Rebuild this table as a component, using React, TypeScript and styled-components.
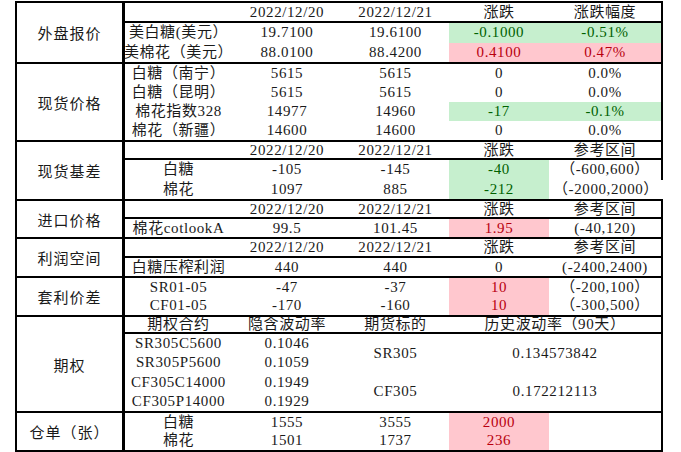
import styled, { createGlobalStyle, css } from "styled-components";

type Tone = "rise" | "fall";
type CellData =
  | string
  | { t: string; tone?: Tone; cols?: number; rows?: number; open?: boolean };

const GlobalStyle = createGlobalStyle`
  body {
    margin: 0;
    background: #fff;
  }
`;

const Sheet = styled.div`
  margin: 1px 0 0 15px;
  width: fit-content;
  border-top: 2px solid #000;
  border-left: 2px solid #000;
  font-family: "Liberation Serif", "Noto Sans CJK SC", serif;
  font-size: 15px;
  color: #1a1a1a;
`;

const Section = styled.div`
  display: flex;
  border-bottom: 2px solid #000;
`;

const Label = styled.div`
  width: 108px;
  box-sizing: border-box;
  border-right: 3px solid #000;
  display: flex;
  align-items: center;
  justify-content: center;
  letter-spacing: 1px;
  font-size: 15px;
`;

const Grid = styled.div<{ $rows: string }>`
  display: grid;
  grid-template-columns: 107px 110px 107px 100px 114px;
  grid-template-rows: ${(p) => p.$rows};
`;

const toneStyle = {
  rise: css`
    background: #ffc7ce;
    color: #b8000f;
  `,
  fall: css`
    background: #c6efce;
    color: #006100;
  `,
};

const Cell = styled.div<{
  $tone?: Tone;
  $head?: boolean;
  $edge?: boolean;
  $open?: boolean;
  $cols?: number;
  $rows?: number;
}>`
  display: flex;
  align-items: center;
  justify-content: ${(p) => (p.$open ? "flex-start" : "center")};
  padding-left: ${(p) => (p.$open ? "4px" : "0")};
  box-sizing: border-box;
  white-space: nowrap;
  letter-spacing: 0.6px;
  line-height: 1;
  grid-column: span ${(p) => p.$cols ?? 1};
  grid-row: span ${(p) => p.$rows ?? 1};
  border-bottom: ${(p) => (p.$head ? "2px solid #000" : "none")};
  border-right: ${(p) => (p.$edge ? "2px solid #000" : "none")};
  ${(p) => p.$tone && toneStyle[p.$tone]}
`;

const Row = ({ cells, head }: { cells: CellData[]; head?: boolean }) => (
  <>
    {cells.map((c, i) => {
      const d = typeof c === "string" ? { t: c } : c;
      const last = i === cells.length - 1 && !d.open;
      return (
        <Cell
          key={i}
          $head={head}
          $edge={last}
          $tone={d.tone}
          $open={d.open}
          $cols={d.cols}
          $rows={d.rows}
        >
          {d.t}
        </Cell>
      );
    })}
  </>
);

const dates = ["", "2022/12/20", "2022/12/21", "涨跌", "参考区间"];

export default function App() {
  return (
    <>
      <GlobalStyle />
      <Sheet>
        <Section>
          <Label>外盘报价</Label>
          <Grid $rows="20px 19.5px 19.5px">
            <Row head cells={["", "2022/12/20", "2022/12/21", "涨跌", "涨跌幅度"]} />
            <Row
              cells={[
                "美白糖(美元）",
                "19.7100",
                "19.6100",
                { t: "-0.1000", tone: "fall" },
                { t: "-0.51%", tone: "fall" },
              ]}
            />
            <Row
              cells={[
                "美棉花（美元）",
                "88.0100",
                "88.4200",
                { t: "0.4100", tone: "rise" },
                { t: "0.47%", tone: "rise" },
              ]}
            />
          </Grid>
        </Section>

        <Section>
          <Label>现货价格</Label>
          <Grid $rows="19px 19px 19px 19px">
            <Row cells={["白糖（南宁）", "5615", "5615", "0", "0.0%"]} />
            <Row cells={["白糖（昆明）", "5615", "5615", "0", "0.0%"]} />
            <Row
              cells={[
                "棉花指数328",
                "14977",
                "14960",
                { t: "-17", tone: "fall" },
                { t: "-0.1%", tone: "fall" },
              ]}
            />
            <Row cells={["棉花（新疆）", "14600", "14600", "0", "0.0%"]} />
          </Grid>
        </Section>

        <Section>
          <Label>现货基差</Label>
          <Grid $rows="18px 19.5px 19.5px">
            <Row head cells={dates} />
            <Row cells={["白糖", "-105", "-145", { t: "-40", tone: "fall" }, "（-600,600）"]} />
            <Row
              cells={[
                "棉花",
                "1097",
                "885",
                { t: "-212", tone: "fall" },
                { t: "（-2000,2000）", open: true },
              ]}
            />
          </Grid>
        </Section>

        <Section>
          <Label>进口价格</Label>
          <Grid $rows="18px 18px">
            <Row head cells={dates} />
            <Row cells={["棉花cotlookA", "99.5", "101.45", { t: "1.95", tone: "rise" }, "(-40,120)"]} />
          </Grid>
        </Section>

        <Section>
          <Label>利润空间</Label>
          <Grid $rows="19px 18px">
            <Row head cells={dates} />
            <Row cells={["白糖压榨利润", "440", "440", "0", "(-2400,2400)"]} />
          </Grid>
        </Section>

        <Section>
          <Label>套利价差</Label>
          <Grid $rows="18.5px 18.5px">
            <Row cells={["SR01-05", "-47", "-37", { t: "10", tone: "rise" }, "（-200,100）"]} />
            <Row cells={["CF01-05", "-170", "-160", { t: "10", tone: "rise" }, "（-300,500）"]} />
          </Grid>
        </Section>

        <Section>
          <Label>期权</Label>
          <Grid $rows="17px 19.25px 19.25px 19.25px 19.25px">
            <Row
              head
              cells={["期权合约", "隐含波动率", "期货标的", { t: "历史波动率（90天）", cols: 2 }]}
            />
            <Row
              cells={[
                "SR305C5600",
                "0.1046",
                { t: "SR305", rows: 2 },
                { t: "0.134573842", rows: 2, cols: 2 },
              ]}
            />
            <Cell>SR305P5600</Cell>
            <Cell>0.1059</Cell>
            <Row
              cells={[
                "CF305C14000",
                "0.1949",
                { t: "CF305", rows: 2 },
                { t: "0.172212113", rows: 2, cols: 2 },
              ]}
            />
            <Cell>CF305P14000</Cell>
            <Cell>0.1929</Cell>
          </Grid>
        </Section>

        <Section>
          <Label>仓单（张）</Label>
          <Grid $rows="18.5px 18.5px">
            <Row cells={["白糖", "1555", "3555", { t: "2000", tone: "rise" }, ""]} />
            <Row cells={["棉花", "1501", "1737", { t: "236", tone: "rise" }, ""]} />
          </Grid>
        </Section>
      </Sheet>
    </>
  );
}
